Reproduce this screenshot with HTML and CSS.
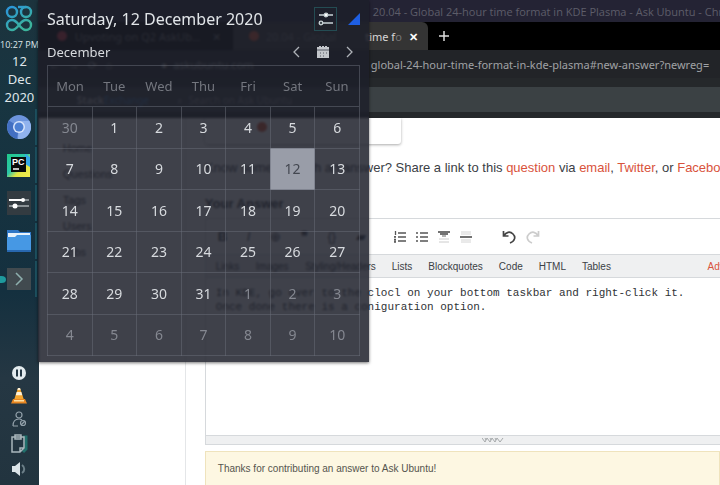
FILE: index.html
```
<!DOCTYPE html>
<html lang="en">
<head>
<meta charset="utf-8">
<title>Desktop calendar</title>
<link rel="stylesheet" href="styles.css">
</head>
<body>
<div class="desktop">
  <aside class="panel">
    <button class="launcher" aria-label="Application launcher">
      <svg width="28" height="28" viewBox="0 0 28 28" fill="none" stroke="url(#lg)" stroke-width="2.4">
        <defs><linearGradient id="lg" gradientUnits="userSpaceOnUse" x1="2" y1="2" x2="16" y2="24"><stop offset="0" stop-color="#2a94dc"/><stop offset="1" stop-color="#3cb49c"/></linearGradient></defs>
        <circle cx="7" cy="7" r="5"/><circle cx="21" cy="7" r="5"/><path d="M13 2h8"/>
        <path d="M14 20C11 16 9.500 15 7 15a5 5 0 0 0 0 10c2.500 0 4-1 7-5s4.500-5 7-5a5 5 0 0 1 0 10c-2.500 0-4-1-7-5z"/>
      </svg>
    </button>
    <div class="clock"><span class="time">10:27 PM</span><span>12</span><span>Dec</span><span>2020</span></div>
    <nav class="tasks">
      <button class="task" aria-label="Chromium">
        <svg width="24" height="24" viewBox="0 0 24 24"><circle cx="12" cy="12" r="12" fill="#6c94dc"/><path d="M12 12 2 5.500A12 12 0 0 0 10 23.800z" fill="#426fc2"/><path d="M12 6h10.400A12 12 0 0 1 11 24z" fill="#91b3ee"/><circle cx="12" cy="12" r="6" fill="#d9e5fb"/><circle cx="12" cy="12" r="4.500" fill="#4d80d3"/></svg>
      </button>
      <button class="task" aria-label="PyCharm">
        <svg width="24" height="24" viewBox="0 0 24 24"><defs><linearGradient id="pc" x1="0" y1="0" x2="1" y2="1"><stop offset="0" stop-color="#20c98b"/><stop offset=".45" stop-color="#2cc6a8"/><stop offset=".65" stop-color="#dfe545"/><stop offset="1" stop-color="#f3ee50"/></linearGradient></defs><path fill="url(#pc)" d="M0 1h23v23H0z"/><path d="M18 1l5 3v10l-5-3z" fill="#35a9e6"/><path d="M4 4h15v15H4z" fill="#080b0a"/><text x="5" y="12" class="pc">PC</text><path d="M6 16h6" stroke="#fff" stroke-width="1.500"/></svg>
      </button>
      <button class="task" aria-label="Settings">
        <svg width="24" height="24" viewBox="0 0 24 24"><path d="M0 0h24v24H0z" fill="#333b41"/><path d="M2 9h20M2 15h20" stroke="#8a9195" stroke-width="2"/><path d="M2 9h13" stroke="#fff" stroke-width="2"/><circle cx="16" cy="9" r="2" fill="#fff"/><circle cx="8" cy="15" r="2.500" fill="#fff"/></svg>
      </button>
      <button class="task" aria-label="Files">
        <svg width="24" height="24" viewBox="0 0 24 24"><path d="M0 1h11l2 2h11v19H0z" fill="#2f77c6"/><path d="M1 4h22v6H1z" fill="#e7f2fb"/><path d="M0 8h8l2-2h14v16H0z" fill="#4698e4"/><path d="M0 21h24v2H0z" fill="#2868af"/></svg>
      </button>
      <button class="task running" aria-label="Terminal">
        <svg width="24" height="24" viewBox="0 0 24 24"><path d="M0 1h24v22H0z" fill="#414a4f"/><path d="m9 6 6 6-6 6" fill="none" stroke="#8eb0ae" stroke-width="1.500"/></svg>
      </button>
    </nav>
    <div class="tray">
      <button aria-label="Pause"><svg width="16" height="16" viewBox="0 0 16 16"><circle cx="8" cy="8" r="7" fill="#e4ecef"/><path d="M6 4.500v7M10 4.500v7" stroke="#243744" stroke-width="2"/></svg></button>
      <button aria-label="VLC"><svg width="16" height="16" viewBox="0 0 16 16"><path d="M7 0h2l4 12H3z" fill="#f4a52f"/><path d="M5.700 4h4.600l1 3.200H4.700zM7 0h2l.6 2H6.400z" fill="#fff1d6"/><path d="M2 11h12l2 4.500H0z" fill="#e88722"/><path d="M3 12h10v1.500H3z" fill="#ffe0a2"/></svg></button>
      <button aria-label="User status"><svg width="16" height="16" viewBox="0 0 16 16" fill="none" stroke="#93a1aa" stroke-width="1.200"><circle cx="8" cy="4" r="3"/><path d="M2 15c0-5 3-7 6-7 1 0 2 .3 3 1M2 15h5"/><circle cx="12" cy="12" r="2.500"/><path d="m10 14 4-4"/></svg></button>
      <button aria-label="Clipboard"><svg width="20" height="20" viewBox="0 0 20 20" fill="none" stroke="#a9b6bc" stroke-width="1.500"><path d="M14 3h3v12l-3 3" stroke="#216f6b" stroke-width="3"/><path d="M3 3h12v11l-4 4H3zM6 1h6v4H6zM11 18v-4h4"/></svg></button>
      <button aria-label="Volume"><svg width="16" height="16" viewBox="0 0 16 16"><path d="M1 5h3l5-4v14l-5-4H1z" fill="#dce5e9"/><path d="M11 4c3 2 3 6 0 8" fill="none" stroke="#6c7f88" stroke-width="2"/></svg></button>
    </div>
  </aside>

  <main class="browser">
    <header class="titlebar">20.04 - Global 24-hour time format in KDE Plasma - Ask Ubuntu - Chromium</header>
    <div class="tabs">
      <div class="tab"><i class="dot red"></i><span>Upvoting on Q2 AskUb…</span><i class="x">✕</i></div>
      <div class="tab active"><i class="dot orange"></i><span class="name">20.04 - Global</span><span>time f<span class="fade">o</span></span><button class="close" aria-label="Close tab">✕</button></div>
      <button class="plus" aria-label="New tab"><svg width="10" height="10" viewBox="0 0 10 10"><path d="M5 0v10M0 5h10" stroke="#ddd" stroke-width="1.500"/></svg></button>
    </div>
    <div class="address"><span class="tools">←&nbsp; &nbsp;→&nbsp; &nbsp;⟳&nbsp; &nbsp;⌂</span><span class="host">● &nbsp;askubuntu.com</span><span class="path">global-24-hour-time-format-in-kde-plasma#new-answer?newreg=</span></div>
    <div class="sitebar"><span class="brand"><b>Stack</b>Exchange</span><span>⌕ &nbsp;Search on Ask Ubuntu</span></div>
    <div class="site">
      <nav class="sidenav"><a href="#">Home</a><a href="#">Questions</a><a href="#">Tags</a><a href="#">Users</a><a href="#">Jobs</a></nav>
      <div class="content">
        <div class="card"><i class="dot orange"></i></div>
        <p class="share">Know someone with an answer? Share a link to this <a href="#">question</a> via <a href="#">email</a>, <a href="#">Twitter</a>, or <a href="#">Facebook</a>.</p>
        <label class="answer" for="answer">Your Answer</label>
        <div class="editor">
          <div class="toolbar">
            <div class="text-tools"><b>B</b><i>I</i><span>⊕</span><b>❞</b><span>{}</span><span>▰</span></div>
            <button aria-label="Numbered list"><svg width="12" height="12" viewBox="0 0 12 12" stroke="#555" stroke-width="1.300"><path d="M4 2h8M4 6h8M4 10h8M1.500 0v4M0 6h2M0 8.500h2M0 11h2M1 5v1M1 8v3"/></svg></button>
            <button aria-label="Bulleted list"><svg width="12" height="12" viewBox="0 0 12 12" stroke="#555" stroke-width="1.500"><path d="M4 2h8M4 6h8M4 10h8M0 2h2M0 6h2M0 10h2"/></svg></button>
            <button aria-label="Heading"><svg width="12" height="12" viewBox="0 0 12 12"><path d="M0 1h12M2 3h8" stroke="#444" stroke-width="1.500"/><path d="M4 5h4" stroke="#666"/><path d="M1 8h10M1 11h10" stroke="#ccc"/></svg></button>
            <button aria-label="Horizontal rule"><svg width="12" height="12" viewBox="0 0 12 12"><path d="M1 1h10M1 3h10M1 9h10M1 11h10" stroke="#d4d4d4"/><path d="M0 6h12" stroke="#444" stroke-width="1.500"/></svg></button>
            <button class="undo" aria-label="Undo"><svg width="14" height="14" viewBox="0 0 14 14" fill="none" stroke="#444" stroke-width="1.700"><path d="M1.500 1v5h5M2 5.500C4 2 8 1 11 4s2 7-3 9"/></svg></button>
            <button aria-label="Redo"><svg width="14" height="14" viewBox="0 0 14 14" fill="none" stroke="#ccc" stroke-width="1.700"><path d="M12.500 1v5h-5M12 5.500C10 2 6 1 3 4s-2 7 3 9"/></svg></button>
          </div>
          <nav class="help"><div class="early"><a href="#">Links</a><a href="#">Images</a><a href="#">Styling/Headers</a></div><a href="#">Lists</a><a href="#">Blockquotes</a><a href="#">Code</a><a href="#">HTML</a><a href="#">Tables</a><a class="advanced" href="#">Advanced</a></nav>
          <textarea id="answer" spellcheck="false">In KDE, go over to the clocl on your bottom taskbar and right-click it.
Once done there is a coniguration option.</textarea>
          <div class="grip"><svg width="22" height="5" viewBox="0 0 22 5" fill="none" stroke="#a5a8aa"><path d="m0 0 3 4 2-4 3 4 2-4 3 4 2-4 3 4 3-4M3 0l1 2M8 0l1 2M13 0l1 2"/></svg></div>
        </div>
        <div class="notice">Thanks for contributing an answer to Ask Ubuntu!</div>
      </div>
    </div>
  </main>

  <section class="calendar" aria-label="Calendar">
    <header class="cal-head">
      <h1>Saturday, 12 December 2020</h1>
      <button class="config" aria-label="Configure"><svg width="16" height="16" viewBox="0 0 16 16" stroke="#c9d3d7" stroke-width="1.300"><path d="M1 4h14M2 12h13"/><circle cx="8" cy="4" r="1.800" fill="#fff"/><circle cx="3" cy="12" r="1.800" fill="#394047"/></svg></button>
      <button class="pin" aria-label="Keep open"><svg width="12" height="12" viewBox="0 0 12 12"><path d="M12 0v12H0z" fill="#1e5fe4"/></svg></button>
    </header>
    <div class="month">
      <h2>December</h2>
      <button aria-label="Previous month"><svg width="12" height="12" viewBox="0 0 12 12" fill="none" stroke="#aeb2b8" stroke-width="1.300"><path d="M8 1 3 6l5 5"/></svg></button>
      <button aria-label="Today"><svg width="12" height="12" viewBox="0 0 12 12"><path d="M0 1h2V0h2v1h1V0h2v1h1V0h2v1h2v11H0z" fill="#c3c6cb"/><path d="M0 4h12M3 7h1M6 7h1M9 7h1M3 10h1M6 10h1" stroke="#555963"/></svg></button>
      <button aria-label="Next month"><svg width="12" height="12" viewBox="0 0 12 12" fill="none" stroke="#aeb2b8" stroke-width="1.300"><path d="m4 1 5 5-5 5"/></svg></button>
    </div>
    <table>
      <thead><tr><th>Mon</th><th>Tue</th><th>Wed</th><th>Thu</th><th>Fri</th><th>Sat</th><th>Sun</th></tr></thead>
      <tbody>
        <tr><td class="other">30</td><td>1</td><td>2</td><td>3</td><td>4</td><td>5</td><td>6</td></tr>
        <tr><td>7</td><td>8</td><td>9</td><td>10</td><td>11</td><td class="today">12</td><td>13</td></tr>
        <tr><td>14</td><td>15</td><td>16</td><td>17</td><td>18</td><td>19</td><td>20</td></tr>
        <tr><td>21</td><td>22</td><td>23</td><td>24</td><td>25</td><td>26</td><td>27</td></tr>
        <tr><td>28</td><td>29</td><td>30</td><td>31</td><td class="other">1</td><td class="other">2</td><td class="other">3</td></tr>
        <tr><td class="other">4</td><td class="other">5</td><td class="other">6</td><td class="other">7</td><td class="other">8</td><td class="other">9</td><td class="other">10</td></tr>
      </tbody>
    </table>
  </section>
</div>
</body>
</html>
```
FILE: styles.css
```
* { box-sizing: border-box; }
body { margin: 0; overflow: hidden; font-family: "Noto Sans", sans-serif; }
button { padding: 0; border: 0; background: none; color: inherit; font: inherit; display: flex; align-items: center; justify-content: center; }
a { text-decoration: none; color: inherit; }
svg { display: block; }

.desktop { position: relative; display: flex; height: 100vh; min-height: 485px; overflow: hidden; }

/* Left panel */
.panel { flex: 0 0 38px; display: flex; flex-direction: column; align-items: center; padding: 5px 0 8px; background: linear-gradient(#1c333d, #183541 20%, #14303f 60%, #253743 78%, #22343f); color: #dfe6e9; }
.clock { display: flex; flex-direction: column; align-items: center; font-size: 13px; line-height: 18px; margin-top: 5px; }
.clock .time { font-family: "Open Sans", sans-serif; font-size: 9px; line-height: 14px; white-space: nowrap; }
.tasks { display: flex; flex-direction: column; gap: 2px; margin-top: 3px; width: 100%; }
.task { height: 36px; width: 37px; border-right: 2px solid #1d5261; padding-left: 2px; position: relative; }
.running::before { content: ""; position: absolute; left: -3px; top: 15px; width: 9px; height: 7px; border-radius: 50%; background: #1e9a9d; }
.pc { font: bold 9px "Liberation Sans", sans-serif; fill: #fff; }
.tray { margin-top: auto; display: flex; flex-direction: column; align-items: center; gap: 7px; }

/* Browser window */
.browser { flex: 1; min-width: 0; display: flex; flex-direction: column; background: #fff; }
.titlebar { height: 22px; padding-left: 334px; background: #242334; color: #5d5d69; font-family: "Open Sans", sans-serif; font-size: 11px; line-height: 23px; white-space: nowrap; overflow: hidden; }
.tabs { height: 28px; display: flex; align-items: center; background: #000; color: #d8d8d8; font-size: 11px; white-space: nowrap; }
.tab { width: 194px; height: 28px; display: flex; align-items: center; gap: 8px; padding: 0 12px 0 18px; color: #777; }
.tab .x { margin-left: auto; font-style: normal; }
.tab.active { width: 195px; padding: 0 10px 0 14px; background: #343434; border-radius: 6px 6px 0 0; color: #d8d8d8; }
.tab.active .name { width: 98px; color: #777; }
.tab.active { gap: 7px; padding-left: 16px; }
.fade { color: #777; }
.close { margin-left: auto; color: #fff; font-weight: bold; }
.dot { flex: none; width: 10px; height: 10px; border-radius: 50%; display: block; }
.red { background: #d22f3c; }
.orange { background: #df5430; }
.plus { margin-left: 11px; }
.address { height: 28px; display: flex; align-items: center; background: #222428; color: #a0a2a5; font-size: 11px; white-space: nowrap; overflow: hidden; }
.tools { width: 122px; padding-left: 10px; flex: none; }
.host { width: 210px; flex: none; }
.sitebar { height: 40px; border-style: solid; border-color: #25282b; border-width: 9px 0 6px; background: #3b4144; color: #888; display: flex; align-items: center; gap: 28px; padding-left: 38px; font-size: 10px; }
.brand { color: #397cb5; }
.brand b { color: #aaa; }
.site { flex: 1; display: flex; min-height: 0; }
.sidenav { flex: 0 0 147px; border-right: 1px solid #e4e6e8; padding: 23px 24px; display: flex; flex-direction: column; gap: 12px; font: 11px/14px "Liberation Sans", sans-serif; color: #3b4045; }
.content { flex: 1; min-width: 0; padding-left: 19px; font-family: "Liberation Sans", sans-serif; color: #3b4045; }
.card { width: 196px; height: 26px; border-radius: 0 0 3px 3px; box-shadow: 0 1px 3px #0005; padding: 4px 52px; }
.share { margin: 16px 0 21px; font-size: 13px; line-height: 15px; white-space: nowrap; }
.share a, .help .advanced { color: #d9533c; }
.answer { display: block; font-size: 13px; line-height: 15px; font-weight: bold; margin-bottom: 7px; }
.editor { border: 1px solid #d6d9dc; border-right: 0; }
.toolbar { height: 35px; display: flex; align-items: center; gap: 10px; }
.text-tools { width: 178px; display: flex; justify-content: space-between; padding: 0 18px 0 12px; font-size: 13px; }
.undo { margin-left: 20px; }
.help { height: 24px; display: flex; align-items: center; gap: 16px; background: #eff0f1; border: solid #d6d9dc; border-width: 1px 0; font-size: 10px; white-space: nowrap; }
.early { width: 170px; display: flex; justify-content: space-between; padding-left: 10px; }
.help .advanced { margin-left: auto; margin-right: -32px; }
textarea { display: block; width: 100%; height: 157px; resize: none; border: 0; outline: 0; padding: 8px 10px; overflow: hidden; font: 11px/14px "Liberation Mono", monospace; color: #303336; white-space: pre; background: #fff; }
.grip { height: 9px; border-top: 1px solid #d6d9dc; background: #eff0f1; display: flex; justify-content: center; align-items: center; padding-left: 60px; }
.notice { margin-top: 6px; height: 50px; padding: 10px 12px; background: #fdf7e2; border: 1px solid #efe3bd; font-size: 10px; line-height: 14px; color: #55554e; }

/* Calendar popup */
.calendar { position: absolute; left: 38px; top: 0; width: 331px; padding: 6px 9px; background: #1c1f29d8; backdrop-filter: blur(1px); box-shadow: 0 1px 3px #0008; color: #d7dade; }
.cal-head { display: flex; align-items: center; height: 26px; }
h1 { flex: 1; margin: 0; font-size: 16px; font-weight: 400; line-height: 26px; color: #e1e5e8; white-space: nowrap; }
.config { width: 23px; height: 24px; border: 1px solid #244c53; margin-right: 11px; }
.month { display: flex; align-items: center; gap: 14px; height: 33px; padding: 6px 5px 0 0; }
h2 { flex: 1; margin: 0; font-size: 13px; font-weight: 400; }
table { width: 100%; border-collapse: collapse; table-layout: fixed; font-size: 14px; }
th, td { padding: 0; text-align: center; font-weight: 400; border: 1px solid #6a6e7980; }
th { height: 40px; border-width: 1px 0; color: #74777f; font-size: 13px; }
thead { border: 1px solid #6a6e7980; }
tr { height: 41px; }
td { height: 41px; }
tbody { height: 249px; }
.other { color: #858891; }
.today { background: #999da8; color: #434750; }
```
